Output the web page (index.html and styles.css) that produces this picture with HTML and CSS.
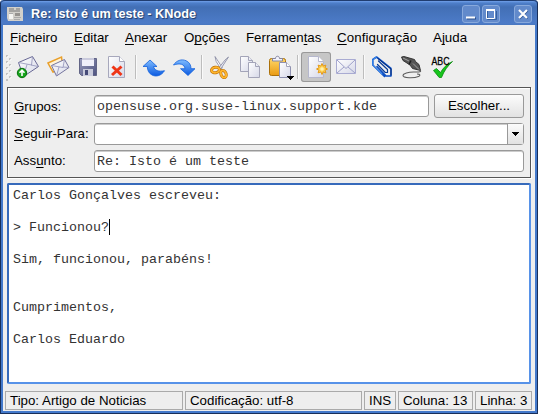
FILE: index.html
```html
<!DOCTYPE html>
<html lang="pt">
<head>
<meta charset="utf-8">
<title>Re: Isto é um teste - KNode</title>
<link rel="stylesheet" href="styles.css">
</head>
<body>
<svg class="defs" width="0" height="0">
  <defs>
    <linearGradient id="paper" x1="0" y1="0" x2="1" y2="1"><stop offset="0" stop-color="#fff"/><stop offset="1" stop-color="#d6d8e8"/></linearGradient>
    <linearGradient id="blue" x1="0" y1="0" x2="0" y2="1"><stop offset="0" stop-color="#7fbcff"/><stop offset="1" stop-color="#0b5ae0"/></linearGradient>
    <linearGradient id="gold" x1="0" y1="0" x2="0" y2="1"><stop offset="0" stop-color="#ffd768"/><stop offset="1" stop-color="#e99a12"/></linearGradient>
    <linearGradient id="disk" x1="0" y1="0" x2="1" y2="1"><stop offset="0" stop-color="#9a9dbd"/><stop offset="1" stop-color="#4d527f"/></linearGradient>
  </defs>
</svg>
<div class="window">
  <header class="titlebar">
    <svg class="app-icon" width="16" height="14" viewBox="0 0 16 14"><path d="M0 0h15l1 2v12H1L0 11z" fill="#d2d0cb"/><path d="M2 2h5M9 2h4M2 4h11" stroke="#777"/><path d="M2 7h4v5H2z" fill="#f5f5f2"/><path d="M8 6h5v3H8z" fill="#96938f"/><path d="M7 10.500h7M7 12.500h6M2 6.500h4" stroke="#aaa"/></svg>
    <h1>Re: Isto é um teste - KNode</h1>
    <div class="controls">
      <button class="ctl"><svg width="18" height="18"><path d="M5 13.500h9" stroke="#294e8d" stroke-width="2"/><path d="M4 12.500h9" stroke="#fff" stroke-width="2"/></svg></button>
      <button class="ctl"><svg width="18" height="18"><path d="M5.500 6v8.500h9V6" stroke="#36609f" fill="none"/><path d="M4.500 5v8.500h8V5" stroke="#fff" fill="none"/><path d="M4 5h9" stroke="#fff" stroke-width="2"/></svg></button>
      <button class="ctl close"><svg width="18" height="18"><path d="M5.500 5.500l8 8m0-8l-8 8" stroke="#294e8d" stroke-width="2.200"/><path d="M5 5l8 8m0-8l-8 8" stroke="#fff" stroke-width="2.200"/></svg></button>
    </div>
  </header>
  <nav class="menu">
    <span><u>F</u>icheiro</span><span><u>E</u>ditar</span><span><u>A</u>nexar</span><span>O<u>p</u>ções</span><span>Ferramen<u>t</u>as</span><span class="m-config"><u>C</u>onfiguração</span><span>A<u>j</u>uda</span>
  </nav>
  <div class="toolbar">
    <svg class="grip" width="7" height="28"><g fill="#c3c3c3"><path d="M0 1h2v2H0zM3 4h2v2H3zM0 7h2v2H0zM3 10h2v2H3zM0 13h2v2H0zM3 16h2v2H3zM0 19h2v2H0zM3 22h2v2H3zM0 25h2v2H0z"/></g><path d="M2 2v1H1M5 5v1H4M2 8v1H1M5 11v1H4M2 14v1H1M5 17v1H4M2 20v1H1M5 23v1H4" stroke="#fff" fill="none"/></svg>
    <svg class="tool" viewBox="0 0 30 30"><path d="M5.500 10.500L19.500 4.500 25.500 14.500 10.500 24.500z" fill="url(#paper)" stroke="#686894"/><path d="M5.500 10.500L18.500 13 19.500 4.500M10.500 24L14 12.500M25 14.500L18 13" fill="none" stroke="#8f91b8" stroke-width=".8"/><circle cx="9" cy="21" r="4.700" fill="#18a51d" stroke="#08710d"/><path d="M9 24v-5.500M6.500 20.700L9 18.200l2.500 2.500" fill="none" stroke="#fff" stroke-width="1.600"/></svg>
    <svg class="tool" viewBox="0 0 30 30"><path d="M5 11L18.500 5 20 17 10 20z" fill="#fff4d9" stroke="#e9a02c" stroke-width="1.500"/><path d="M8.500 13.500L21.500 7.500 26 15.500 13.500 24z" fill="url(#paper)" stroke="#75759e"/><path d="M8.500 13.500L20 15.500 21.500 7.500M13.500 24L16 15M26 15.500L20 15" fill="none" stroke="#8f91b8" stroke-width=".8"/></svg>
    <svg class="tool" viewBox="0 0 30 30"><path d="M6.500 6.500h17v17h-15l-2-2z" fill="url(#disk)" stroke="#626586"/><path d="M9 6h12v8H9z" fill="#f0f0fa"/><path d="M9 7h12" stroke="#a5a6c0"/><path d="M10 17h10v7H10z" fill="#c9cbdb"/><path d="M12 18h3v5h-3z" fill="#464b78"/></svg>
    <svg class="tool" viewBox="0 0 30 30"><path d="M5.500 4.500h11l5 5v16h-16z" fill="url(#paper)" stroke="#a7a8bc"/><path d="M16.500 4.500v5h5" fill="#fff" stroke="#a7a8bc"/><path d="M9.500 14.500l9 8.500m0-8.500L9 23" stroke="#ef3517" stroke-width="3"/></svg>
    <i class="sep"></i>
    <svg class="tool" viewBox="0 0 30 30"><path d="M4 14.500L11 8l7 6.500h-3.500c1 4 5 5.500 11 4.200-3 5-8.500 6.500-12.500 4.300-3.300-1.800-4.500-4.500-4.700-8.500z" fill="url(#blue)" stroke="#1261dd" stroke-width=".8"/></svg>
    <svg class="tool" viewBox="0 0 30 30"><path d="M4.500 13c3-4.500 8-6.300 12.500-4.300 3.500 1.600 5 4.300 5 8h4L19 23.500l-7.500-6.800H16c-.5-4.500-5-6-11.500-3.700z" fill="url(#blue)" stroke="#1261dd" stroke-width=".8"/></svg>
    <i class="sep"></i>
    <svg class="tool" viewBox="0 0 30 30"><path d="M10 4.500l1.200 5 5 8 1-2z" fill="#fff" stroke="#83859e" stroke-width=".8"/><path d="M23.500 5L15 18l-2-1 7-9z" fill="#e8e9f3" stroke="#83859e" stroke-width=".8"/><ellipse cx="10.500" cy="18" rx="4" ry="2.700" transform="rotate(-10 10.500 18)" fill="none" stroke="#b96e06" stroke-width="3"/><ellipse cx="18.500" cy="22" rx="2.500" ry="3.700" transform="rotate(-25 18.500 22)" fill="none" stroke="#b96e06" stroke-width="3"/><ellipse cx="10.500" cy="18" rx="4" ry="2.700" transform="rotate(-10 10.500 18)" fill="none" stroke="#ffb52c" stroke-width="1.900"/><ellipse cx="18.500" cy="22" rx="2.500" ry="3.700" transform="rotate(-25 18.500 22)" fill="none" stroke="#ffb52c" stroke-width="1.900"/></svg>
    <svg class="tool" viewBox="0 0 30 30"><g fill="url(#paper)" stroke="#a3a4b8"><path d="M5.500 4.500h8l4 4v11h-12z"/><path d="M13.500 4.500v4h4"/><path d="M13.500 10.500h7l4 4v11h-11z"/><path d="M20.500 10.500v4h4"/></g></svg>
    <svg class="tool" viewBox="0 0 30 30"><rect x="4.500" y="6.500" width="16" height="17" rx="2" fill="url(#gold)" stroke="#ab7009"/><path d="M7.500 9V6.500h3c0-3 4-3 4 0h3V9z" fill="#f1f1fa" stroke="#8385a1"/><path d="M14.500 10.500h7l4 4v11h-11z" fill="url(#paper)" stroke="#8f91b0"/><path d="M21.500 10.500v4h4" fill="#fff" stroke="#a3a4b8"/><path d="M22 24h7v1h-1v1h-1v1h-1v1h-1v-1h-1v-1h-1v-1h-1z"/></svg>
    <i class="sep"></i>
    <svg class="tool pressed" viewBox="0 0 30 30"><path d="M7.500 4.500h10l5 5v16h-15z" fill="url(#paper)" stroke="#b5b7cd"/><path d="M17.500 4.500v5h5" fill="#fff" stroke="#b5b7cd"/><path d="M21 11.500l1.200 2.600 2.700-1-.9 2.700 2.500 1.200-2.500 1.200.9 2.700-2.700-1L21 22.500l-1.200-2.600-2.700 1 .9-2.700-2.500-1.200 2.500-1.200-.9-2.700 2.700 1z" fill="#ffd153" stroke="#e49a18"/><circle cx="21" cy="17" r="1.800" fill="#fff3b0"/></svg>
    <svg class="tool" viewBox="0 0 30 30"><path d="M5.500 7.500h19v14h-19z" fill="url(#paper)" stroke="#a9abd2"/><path d="M6 8l9 8.500L24 8M6 21l7-6M24 21l-7-6" fill="none" stroke="#9ea1ca"/></svg>
    <i class="sep"></i>
    <svg class="tool" viewBox="0 0 30 30"><g fill="none" stroke-linejoin="round" stroke-linecap="round"><path d="M17.500 24.500L5.800 13V7.500L9.500 5 24 16.500v7.500h-5L10 14.500" stroke="#0c4fc4" stroke-width="1.600"/><path d="M11.500 9L20.500 17.500v3h-2.200L10.500 12.500" stroke="#0a3c96" stroke-width="1.200"/><path d="M15 22L5.800 13V7.500L9.500 5" stroke="#3b91f5" stroke-width="1"/><path d="M11 6.500L24 17v6" stroke="#06276d" stroke-width=".9"/></g></svg>
    <svg class="tool" viewBox="0 0 30 30"><path d="M4.500 5L7 4.500l10.500 3 1 2 3.500 3 1.500 6-8-2-2.500-3.500-7-4.500z" fill="#555" stroke="#2c2c2c" stroke-width=".9"/><path d="M14 8.500l-2 4" stroke="#1d1d1d" stroke-width="1.400"/><path d="M6 6l6 3M16 11.500l6 6" stroke="#aaa" stroke-width=".9"/><path d="M23 18c2 2-1 2.200-5 2-7-.3-12 1.800-12 3.500 0 2.700 11 2.800 15.500 1 2-.8 2-2.500-1.500-2.500" fill="none" stroke="#5b5b5b" stroke-width="1.100"/></svg>
    <svg class="tool" viewBox="0 0 30 30"><path d="M6.500 18.500l3-2 4 4C16 16 20 12 25.500 9.500 20.500 14 17 19 14.500 25.500h-2.300z" fill="#17c51c" stroke="#078a0c" stroke-width=".8"/><text x="4.500" y="13" textLength="18" lengthAdjust="spacingAndGlyphs" class="abc">ABC</text></svg>
  </div>
  <main>
    <section class="fields">
      <label><u>G</u>rupos:</label><div class="row"><div class="input">opensuse.org.suse-linux.support.kde</div><button class="choose">Esc<u>o</u>lher...</button></div>
      <label class="follow"><u>S</u>eguir-Para:</label><div class="input combo"><span class="arrow"><svg width="7" height="4"><path d="M0 0h7v1H6v1H5v1H4v1H3V3H2V2H1V1H0z"/></svg></span></div>
      <label class="subject">Ass<u>u</u>nto:</label><div class="input">Re: Isto é um teste</div>
    </section>
    <div class="editor"><p>Carlos Gonçalves escreveu:</p><p>&gt; Funcionou?<span class="caret"></span></p><p>Sim, funcionou, parabéns!</p><p class="gap">Cumprimentos,</p><p>Carlos Eduardo</p></div>
  </main>
  <footer class="status"><span class="s-type">Tipo: Artigo de Noticias</span><span class="s-code">Codificação: utf-8</span><span>INS</span><span class="s-col">Coluna: 13</span><span>Linha: 3</span></footer>
</div>
</body>
</html>
```
FILE: styles.css
```css
* { box-sizing: border-box; }
body { margin: 0; background: #fff; font: 13.3px "Liberation Sans", Arial, sans-serif; color: #000; }
u { text-decoration: underline; text-decoration-thickness: 1px; text-underline-offset: 2px; text-decoration-skip-ink: none; }
.defs { position: absolute; }
.window {
  width: 538px; height: 414px; padding: 0 3px 3px;
  display: flex; flex-direction: column;
  background: #eee; background-clip: content-box;
  border-radius: 4px 4px 0 0;
  box-shadow: inset 1px -1px #192f59, inset -1px 0 #192f59, inset 0 0 0 3px #4379cb;
}
.titlebar {
  height: 25px; margin: 0 -2px; padding: 1px 5px 0 6px; flex: none;
  display: flex; align-items: center;
  border-top: 1px solid #203d70; border-radius: 4px 4px 0 0;
  background: linear-gradient(#71a0ea 0, #4e7fca 2px, #426fb5 6px, #4c7bc8 22px, #4877bf);
}
.app-icon { display: block; }
h1 { margin: 0 0 0 8px; width: 167px; white-space: nowrap; font: bold 12.7px "Liberation Sans", sans-serif; color: #fff; text-shadow: 1px 1px 1px #203b68; }
.controls { display: flex; gap: 2px; margin-left: auto; }
.ctl { width: 18px; height: 18px; padding: 0; border: 1px solid #88a9dc; border-radius: 3px; background: #628acb; }
.ctl svg { display: block; margin: -1px; }
.close { margin-left: 12px; }
.menu { height: 26px; padding: 0 0 1px 7px; flex: none; display: grid; grid-template-columns: 64px 51px 59px 62px 91px 96px 50px; align-items: center; white-space: nowrap; }
.m-config { letter-spacing: .1px; }
.toolbar { height: 36px; padding: 1px 0 0 3px; flex: none; display: flex; align-items: flex-start; }
.grip { margin-top: 2px; }
.tool { width: 30px; height: 30px; flex: none; }
.pressed { border-radius: 3px; background: #c6c6c6; box-shadow: inset 0 0 0 1px #999; }
.sep { width: 6px; height: 24px; margin-top: 3px; background: linear-gradient(90deg, transparent 2px, #bdbdbd 2px, #bdbdbd 3px, #fafafa 3px, #fafafa 4px, transparent 4px); }
.abc { font: 11.5px "Liberation Sans", sans-serif; stroke: #000; stroke-width: .3px; }
main { padding: 0 4px; }
.fields {
  height: 91px; padding: 6px 6px 4px; border: 1px solid #555; box-shadow: inset 1px 1px #fff, 1px 1px #fff;
  display: grid; grid-template-columns: 80px 430px; grid-template-rows: 24px 22px 22px; row-gap: 5px; align-items: center;
}
.follow, .subject { margin-top: -1px; }
.row { display: flex; align-items: center; gap: 5px; }
.input { height: 22px; flex: 1; padding: 1px 2px 0; border: 1px solid #999; border-radius: 3px; background: #fff; box-shadow: inset 0 1px #ccc; font: 13.333px/20px "Liberation Mono", monospace; color: #333; white-space: pre; }
.choose { width: 90px; height: 24px; padding: 0 0 1px; border: 1px solid #999; border-radius: 3px; background: linear-gradient(#fcfcfc, #e2e2e2); font: inherit; }
.combo { display: flex; justify-content: flex-end; padding: 0; }
.arrow { width: 16px; display: grid; place-items: center; border-left: 1px solid #999; background: linear-gradient(#fbfbfb, #e2e2e2); }
.arrow svg { display: block; }
.editor { height: 201px; margin-top: 5px; padding: 3px 4px; border: 2px solid #5792e8; border-top-color: #366abb; border-left-color: #366abb; border-radius: 2px; background: #fff; font: 13.333px/16px "Liberation Mono", monospace; color: #333; white-space: pre; }
.editor p { margin: 0 0 16px; height: 16px; }
.editor .gap { margin-top: 32px; }
.caret { display: inline-block; width: 1px; height: 16px; margin-top: -1px; background: #000; vertical-align: top; }
.status { height: 19px; margin-top: 7px; padding: 0 3px 0 2px; display: grid; grid-template-columns: 178px 177px 32px 75px 57px; grid-template-rows: 19px; gap: 2px; white-space: nowrap; }
.status span { padding: 0 0 0 4px; border: 1px solid #aaa; line-height: 18px; }
```
